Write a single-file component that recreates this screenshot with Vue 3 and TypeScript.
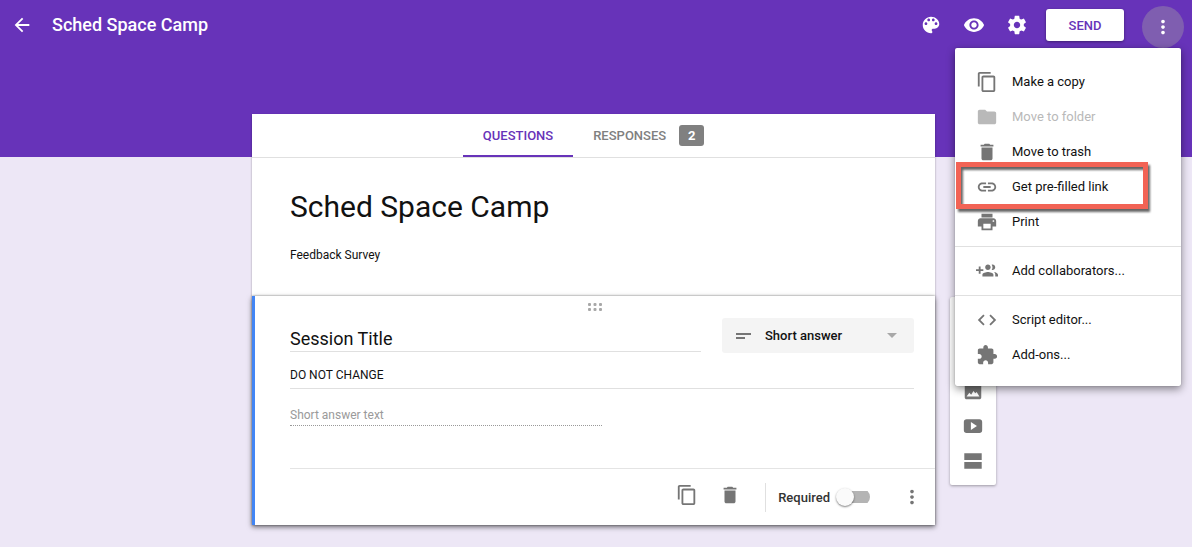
<script setup lang="ts">
import { ref } from 'vue'

type IconName =
  | 'back' | 'palette' | 'eye' | 'gear' | 'more' | 'copy' | 'folder' | 'trash' | 'link' | 'print'
  | 'people' | 'code' | 'addon' | 'add' | 'text' | 'image' | 'video' | 'section'

interface MenuItem {
  label: string
  icon: IconName
  disabled?: boolean
  highlighted?: boolean
}

const icons: Record<IconName, string> = {
  back: 'M20 11H7.83l5.59-5.59L12 4l-8 8 8 8 1.41-1.41L7.83 13H20v-2z',
  palette:
    'M12 3c-4.97 0-9 4.03-9 9s4.03 9 9 9c.83 0 1.5-.67 1.5-1.5 0-.39-.15-.74-.39-1.01-.23-.26-.38-.61-.38-.99 0-.83.67-1.5 1.5-1.5H16c2.76 0 5-2.24 5-5 0-4.42-4.03-8-9-8zm-5.5 9c-.83 0-1.5-.67-1.5-1.5S5.67 9 6.5 9 8 9.67 8 10.5 7.33 12 6.5 12zm3-4C8.67 8 8 7.33 8 6.5S8.67 5 9.5 5s1.5.67 1.5 1.5S10.33 8 9.5 8zm5 0c-.83 0-1.5-.67-1.5-1.5S13.67 5 14.5 5s1.5.67 1.5 1.5S15.33 8 14.5 8zm3 4c-.83 0-1.5-.67-1.5-1.5S16.67 9 17.5 9s1.5.67 1.5 1.5-.67 1.5-1.5 1.5z',
  eye:
    'M12 4.5C7 4.5 2.73 7.61 1 12c1.73 4.39 6 7.5 11 7.5s9.27-3.11 11-7.5c-1.73-4.39-6-7.5-11-7.5zM12 17c-2.76 0-5-2.24-5-5s2.24-5 5-5 5 2.24 5 5-2.24 5-5 5zm0-8c-1.66 0-3 1.34-3 3s1.34 3 3 3 3-1.34 3-3-1.34-3-3-3z',
  gear:
    'M19.43 12.98c.04-.32.07-.64.07-.98s-.03-.66-.07-.98l2.11-1.65c.19-.15.24-.42.12-.64l-2-3.46c-.12-.22-.39-.3-.61-.22l-2.49 1c-.52-.4-1.08-.73-1.69-.98l-.38-2.65C14.46 2.18 14.25 2 14 2h-4c-.25 0-.46.18-.49.42l-.38 2.65c-.61.25-1.17.59-1.69.98l-2.49-1c-.23-.09-.49 0-.61.22l-2 3.46c-.13.22-.07.49.12.64l2.11 1.65c-.04.32-.07.65-.07.98s.03.66.07.98l-2.11 1.65c-.19.15-.24.42-.12.64l2 3.46c.12.22.39.3.61.22l2.49-1c.52.4 1.08.73 1.69.98l.38 2.65c.03.24.24.42.49.42h4c.25 0 .46-.18.49-.42l.38-2.65c.61-.25 1.17-.59 1.69-.98l2.49 1c.23.09.49 0 .61-.22l2-3.46c.12-.22.07-.49-.12-.64l-2.11-1.65zM12 15.5c-1.93 0-3.5-1.57-3.5-3.5s1.57-3.5 3.5-3.5 3.5 1.57 3.5 3.5-1.57 3.5-3.5 3.5z',
  more:
    'M12 8c1.1 0 2-.9 2-2s-.9-2-2-2-2 .9-2 2 .9 2 2 2zm0 2c-1.1 0-2 .9-2 2s.9 2 2 2 2-.9 2-2-.9-2-2-2zm0 6c-1.1 0-2 .9-2 2s.9 2 2 2 2-.9 2-2-.9-2-2-2z',
  copy:
    'M16 1H4c-1.1 0-2 .9-2 2v14h2V3h12V1zm3 4H8c-1.1 0-2 .9-2 2v14c0 1.1.9 2 2 2h11c1.1 0 2-.9 2-2V7c0-1.1-.9-2-2-2zm0 16H8V7h11v14z',
  folder: 'M10 4H4c-1.1 0-1.99.9-1.99 2L2 18c0 1.1.9 2 2 2h16c1.1 0 2-.9 2-2V8c0-1.1-.9-2-2-2h-8l-2-2z',
  trash: 'M6 19c0 1.1.9 2 2 2h8c1.1 0 2-.9 2-2V7H6v12zM19 4h-3.5l-1-1h-5l-1 1H5v2h14V4z',
  link:
    'M3.9 12c0-1.71 1.39-3.1 3.1-3.1h4V7H7c-2.76 0-5 2.24-5 5s2.24 5 5 5h4v-1.9H7c-1.71 0-3.1-1.39-3.1-3.1zM8 13h8v-2H8v2zm9-6h-4v1.9h4c1.71 0 3.1 1.39 3.1 3.1s-1.39 3.1-3.1 3.1h-4V17h4c2.76 0 5-2.24 5-5s-2.24-5-5-5z',
  print:
    'M19 8H5c-1.66 0-3 1.34-3 3v6h4v4h12v-4h4v-6c0-1.66-1.34-3-3-3zm-3 11H8v-5h8v5zm3-7c-.55 0-1-.45-1-1s.45-1 1-1 1 .45 1 1-.45 1-1 1zm-1-9H6v4h12V3z',
  people:
    'M8 10H5V7H3v3H0v2h3v3h2v-3h3v-2zm10 1c1.66 0 2.99-1.34 2.99-3S19.66 5 18 5c-.32 0-.63.05-.91.14.57.81.9 1.79.9 2.86s-.34 2.04-.9 2.86c.28.09.59.14.91.14zm-5 0c1.66 0 2.99-1.34 2.99-3S14.66 5 13 5c-1.66 0-3 1.34-3 3s1.34 3 3 3zm6.62 2.16c.83.73 1.38 1.66 1.38 2.84v2h3v-2c0-1.54-2.37-2.49-4.38-2.84zM13 13c-2 0-6 1-6 3v2h12v-2c0-2-4-3-6-3z',
  code: 'M9.4 16.6L4.8 12l4.6-4.6L8 6l-6 6 6 6 1.4-1.4zm5.2 0l4.6-4.6-4.6-4.6L16 6l6 6-6 6-1.4-1.4z',
  addon:
    'M20.5 11H19V7c0-1.1-.9-2-2-2h-4V3.5C13 2.12 11.88 1 10.5 1S8 2.12 8 3.5V5H4c-1.1 0-1.99.9-1.99 2v3.8H3.5c1.49 0 2.7 1.21 2.7 2.7s-1.21 2.7-2.7 2.7H2V20c0 1.1.9 2 2 2h3.8v-1.5c0-1.49 1.21-2.7 2.7-2.7 1.49 0 2.7 1.21 2.7 2.7V22H17c1.1 0 2-.9 2-2v-4h1.5c1.38 0 2.5-1.12 2.5-2.5S21.88 11 20.5 11z',
  add: 'M12 2C6.48 2 2 6.48 2 12s4.48 10 10 10 10-4.48 10-10S17.52 2 12 2zm5 11h-4v4h-2v-4H7v-2h4V7h2v4h4v2z',
  text: 'M2.5 4v3h5v12h3V7h5V4h-13zm19 5h-9v3h3v7h3v-7h3V9z',
  image:
    'M21 19V5c0-1.1-.9-2-2-2H5c-1.1 0-2 .9-2 2v14c0 1.1.9 2 2 2h14c1.1 0 2-.9 2-2zM5 18l3-4 2 2 2.5-4 2 2.5 1.5-1.5L19 18H5z',
  video: 'M5 4.5C3.2 4.5 2 5.7 2 7.5v9c0 1.8 1.2 3 3 3h14c1.8 0 3-1.2 3-3v-9c0-1.8-1.2-3-3-3H5zM9.7 7.6v8.8l6.6-4.4-6.6-4.4z',
  section: 'M2.5 3.5h19v7.5h-19zM2.5 13h19v7.5h-19z',
}

const menuGroups: MenuItem[][] = [
  [
    { label: 'Make a copy', icon: 'copy' },
    { label: 'Move to folder', icon: 'folder', disabled: true },
    { label: 'Move to trash', icon: 'trash' },
    { label: 'Get pre-filled link', icon: 'link', highlighted: true },
    { label: 'Print', icon: 'print' },
  ],
  [{ label: 'Add collaborators...', icon: 'people' }],
  [
    { label: 'Script editor...', icon: 'code' },
    { label: 'Add-ons...', icon: 'addon' },
  ],
]

const toolbarActions: { label: string; icon: IconName }[] = [
  { label: 'Color palette', icon: 'palette' },
  { label: 'Preview', icon: 'eye' },
  { label: 'Settings', icon: 'gear' },
]

const insertActions: { label: string; icon: IconName }[] = [
  { label: 'Add question', icon: 'add' },
  { label: 'Add title and description', icon: 'text' },
  { label: 'Add image', icon: 'image' },
  { label: 'Add video', icon: 'video' },
  { label: 'Add section', icon: 'section' },
]

const menuOpen = ref(true)
const activeTab = ref<'questions' | 'responses'>('questions')
const formTitle = ref('Sched Space Camp')
const formDescription = ref('Feedback Survey')
const questionTitle = ref('Session Title')
const questionHelp = ref('DO NOT CHANGE')
const questionType = ref('Short answer')
const required = ref(false)
</script>

<template>
  <div class="page">
    <header class="toolbar">
      <button class="icon-button" type="button" aria-label="Back">
        <svg class="icon" viewBox="0 0 24 24"><path :d="icons.back" /></svg>
      </button>
      <h1 class="file-name">{{ formTitle }}</h1>
      <div class="toolbar-icons">
        <button v-for="a in toolbarActions" :key="a.icon" class="icon-button" type="button" :aria-label="a.label">
          <svg class="icon" viewBox="0 0 24 24"><path fill-rule="evenodd" :d="icons[a.icon]" /></svg>
        </button>
      </div>
      <button class="send" type="button">SEND</button>
      <button
        class="more-button"
        type="button"
        aria-label="More"
        aria-haspopup="menu"
        :aria-expanded="menuOpen"
        @click="menuOpen = !menuOpen"
      >
        <svg class="icon" viewBox="0 0 24 24"><path :d="icons.more" /></svg>
      </button>
    </header>

    <div v-if="menuOpen" class="menu" role="menu">
      <div v-for="(group, i) in menuGroups" :key="i" class="menu-group" role="group">
        <button
          v-for="item in group"
          :key="item.label"
          class="menu-item"
          type="button"
          role="menuitem"
          :disabled="item.disabled"
        >
          <svg class="icon menu-icon" viewBox="0 0 24 24" aria-hidden="true"><path :d="icons[item.icon]" /></svg>
          <span>{{ item.label }}</span>
          <span v-if="item.highlighted" class="callout" aria-hidden="true"></span>
        </button>
      </div>
    </div>

    <main class="editor">
      <section class="form-card">
        <div class="tabs" role="tablist">
          <button
            class="tab"
            type="button"
            role="tab"
            :aria-selected="activeTab === 'questions'"
            @click="activeTab = 'questions'"
          >
            QUESTIONS
          </button>
          <button
            class="tab"
            type="button"
            role="tab"
            :aria-selected="activeTab === 'responses'"
            @click="activeTab = 'responses'"
          >
            RESPONSES <span class="badge">2</span>
          </button>
        </div>
        <div class="form-head">
          <input v-model="formTitle" class="field form-title" type="text" aria-label="Form title" />
          <input v-model="formDescription" class="field form-description" type="text" aria-label="Form description" />
        </div>
      </section>

      <section class="question">
        <svg class="handle" viewBox="0 0 14 8" aria-hidden="true">
          <g v-for="y in [0, 5]" :key="y">
            <rect v-for="x in [0, 5.5, 11]" :key="x" :x="x" :y="y" width="3" height="3" rx="1" />
          </g>
        </svg>
        <div class="question-body">
          <div class="question-top">
            <input v-model="questionTitle" class="field question-title" type="text" aria-label="Question" />
            <label class="type-picker">
              <svg class="type-icon" viewBox="0 0 16 8" aria-hidden="true">
                <path d="M0 1h15v2H0zM0 5h9v2H0z" />
              </svg>
              <select v-model="questionType" class="type-select" aria-label="Question type">
                <option>Short answer</option>
                <option>Paragraph</option>
                <option>Multiple choice</option>
              </select>
              <svg class="caret" viewBox="0 0 10 5" aria-hidden="true"><path d="M0 0h10L5 5z" /></svg>
            </label>
          </div>
          <input v-model="questionHelp" class="field question-help" type="text" aria-label="Description" />
          <input class="field answer" type="text" placeholder="Short answer text" aria-label="Answer" disabled />
        </div>
        <footer class="question-footer">
          <div class="question-tools">
            <button class="icon-button" type="button" aria-label="Duplicate">
              <svg class="icon" viewBox="0 0 24 24"><path :d="icons.copy" /></svg>
            </button>
            <button class="icon-button" type="button" aria-label="Delete">
              <svg class="icon" viewBox="0 0 24 24"><path :d="icons.trash" /></svg>
            </button>
          </div>
          <label class="required">
            <span>Required</span>
            <input v-model="required" class="switch" type="checkbox" role="switch" />
          </label>
          <button class="icon-button" type="button" aria-label="More options">
            <svg class="icon" viewBox="0 0 24 24"><path :d="icons.more" /></svg>
          </button>
        </footer>
      </section>

      <aside class="insert-bar">
        <button v-for="a in insertActions" :key="a.icon" class="insert-button" type="button" :aria-label="a.label">
          <svg class="icon" viewBox="0 0 24 24"><path fill-rule="evenodd" :d="icons[a.icon]" /></svg>
        </button>
      </aside>
    </main>
  </div>
</template>

<style>
body {
  margin: 0;
}
</style>

<style scoped>
.page {
  position: relative;
  box-sizing: border-box;
  min-height: 100vh;
  padding-bottom: 20px;
  background: linear-gradient(#6733b9 157px, #ede7f6 157px);
  color: #111;
  font-family: Roboto, 'Liberation Sans', sans-serif;
  font-size: 13px;
}

button,
input,
select {
  box-sizing: border-box;
  margin: 0;
  padding: 0;
  border: 0;
  background: none;
  color: inherit;
  font: inherit;
}

button {
  cursor: pointer;
}

.icon {
  display: block;
  flex: none;
  width: 22px;
  height: 22px;
  fill: currentColor;
}

.icon-button {
  flex: none;
  width: 22px;
  height: 22px;
}

.toolbar {
  display: flex;
  align-items: center;
  height: 50px;
  padding: 0 8px 0 11px;
  color: #fff;
}

.file-name {
  flex: 1;
  margin: 0 0 0 19px;
  font-size: 18px;
  font-weight: 500;
  line-height: 24px;
}

.toolbar-icons {
  display: flex;
  gap: 21px;
  margin-right: 18px;
}

.send {
  width: 78px;
  height: 32px;
  margin-right: 18px;
  border-radius: 3px;
  background: #fff;
  box-shadow: 0 1px 3px rgba(0, 0, 0, 0.4);
  color: #6733b9;
  font-weight: 500;
}

.more-button {
  display: grid;
  place-items: center;
  width: 42px;
  height: 42px;
  margin-top: 3px;
  border-radius: 50%;
  background: #7f5eb0;
}

.menu {
  position: absolute;
  z-index: 2;
  top: 48px;
  right: 11px;
  box-sizing: border-box;
  width: 226px;
  padding: 10px 0 7px;
  border-radius: 2px;
  background: #fff;
  box-shadow: 0 3px 8px rgba(0, 0, 0, 0.45), 0 0 1px rgba(0, 0, 0, 0.4);
}

.menu-group {
  padding: 6px 0 7px;
}

.menu-group + .menu-group {
  border-top: 1px solid #e0e0e0;
}

.menu-item {
  position: relative;
  display: flex;
  align-items: center;
  gap: 14px;
  width: 100%;
  height: 35px;
  padding-left: 21px;
  text-align: left;
}

.menu-icon {
  color: #757575;
}

.menu-item:disabled,
.menu-item:disabled .menu-icon {
  color: #b9b9b9;
}

.callout {
  position: absolute;
  inset: -7px 33px -5px 1px;
  border: 5px solid #f26355;
  filter: drop-shadow(2px 3px 1px rgba(0, 0, 0, 0.6));
  pointer-events: none;
}

.editor {
  display: grid;
  grid-template-columns: minmax(61px, 1fr) minmax(0, 683px) minmax(61px, 1fr);
  margin-top: 64px;
  padding-right: 5px;
}

.form-card {
  grid-column: 2;
  background: #fff;
  box-shadow: 0 1px 2px rgba(0, 0, 0, 0.35);
}

.tabs {
  display: flex;
  justify-content: center;
  height: 43px;
  border-bottom: 1px solid #e0e0e0;
}

.tab {
  display: flex;
  align-items: center;
  gap: 13px;
  padding: 2px 20px 0;
  border-bottom: 2px solid transparent;
  color: #808080;
  font-weight: 500;
}

.tab[aria-selected='true'] {
  border-color: #6733b9;
  color: #6733b9;
}

.badge {
  width: 25px;
  border-radius: 3px;
  background: #808080;
  color: #fff;
  font-weight: 700;
  line-height: 21px;
}

.form-head {
  display: grid;
  gap: 19px;
  padding: 28px 21px 31px 38px;
}

.field {
  display: block;
  width: 100%;
  min-width: 0;
  border-radius: 0;
  outline: none;
}

.form-title {
  height: 40px;
  font-size: 30px;
}

.form-description {
  height: 20px;
  font-size: 12px;
}

.question {
  position: relative;
  grid-column: 2;
  padding-top: 7px;
  border-left: 3px solid #4285f4;
  background: #fff;
  box-shadow: 0 2px 5px rgba(0, 0, 0, 0.55), 0 0 2px rgba(0, 0, 0, 0.4);
}

.question-body {
  padding: 7px 21px 42px 35px;
}

.handle {
  display: block;
  width: 14px;
  height: 8px;
  margin: 0 auto;
  fill: #a8a8a8;
}

.question-top {
  display: grid;
  grid-template-columns: minmax(0, 1fr) 192px;
  align-items: start;
  gap: 21px;
}

.question-title {
  height: 34px;
  padding-top: 8px;
  border-bottom: 1px solid #e0e0e0;
  font-size: 18px;
}

.type-picker {
  display: flex;
  align-items: center;
  height: 35px;
  padding: 0 17px 0 14px;
  border-radius: 3px;
  background: #f4f4f4;
}

.type-icon {
  width: 16px;
  height: 8px;
  margin-right: 13px;
  fill: #757575;
}

.type-select {
  flex: 1;
  min-width: 0;
  height: 35px;
  outline: none;
  appearance: none;
  font-weight: 500;
}

.caret {
  width: 10px;
  height: 5px;
  fill: #a8a8a8;
}

.question-help {
  height: 27px;
  margin-top: 9px;
  border-bottom: 1px solid #e0e0e0;
  font-size: 12px;
}

.answer {
  width: 50%;
  height: 22px;
  margin-top: 15px;
  border-bottom: 1px dotted #999;
  font-size: 12px;
}

.answer::placeholder {
  color: #9a9a9a;
}

.question-footer {
  display: flex;
  align-items: center;
  justify-content: flex-end;
  height: 56px;
  margin-left: 35px;
  padding-right: 12px;
  border-top: 1px solid #e4e4e4;
  color: #757575;
}

.question-tools {
  display: flex;
  gap: 21px;
  padding: 0 24px 4px 0;
}

.required {
  display: flex;
  align-items: center;
  gap: 6px;
  height: 29px;
  margin-right: 31px;
  padding-left: 12px;
  border-left: 1px solid #e0e0e0;
  color: #333;
  font-weight: 500;
}

.switch {
  display: flex;
  align-items: center;
  width: 34px;
  height: 18px;
  appearance: none;
  background: linear-gradient(#b4b4b4, #b4b4b4) right center / 28px 12px no-repeat;
  border-radius: 9px;
}

.switch::before {
  content: '';
  width: 18px;
  height: 18px;
  border-radius: 50%;
  background: #fafafa;
  box-shadow: 0 1px 2px rgba(0, 0, 0, 0.5);
}

.switch:checked {
  justify-content: flex-end;
}

.insert-bar {
  grid-column: 3;
  grid-row: 2;
  align-self: start;
  justify-self: start;
  display: flex;
  flex-direction: column;
  width: 46px;
  margin: 1px 0 0 15px;
  padding: 6px 0 7px;
  border-radius: 2px;
  background: #fff;
  box-shadow: 0 1px 3px rgba(0, 0, 0, 0.35);
  color: #757575;
}

.insert-button {
  display: grid;
  place-items: center;
  height: 35px;
}
</style>
